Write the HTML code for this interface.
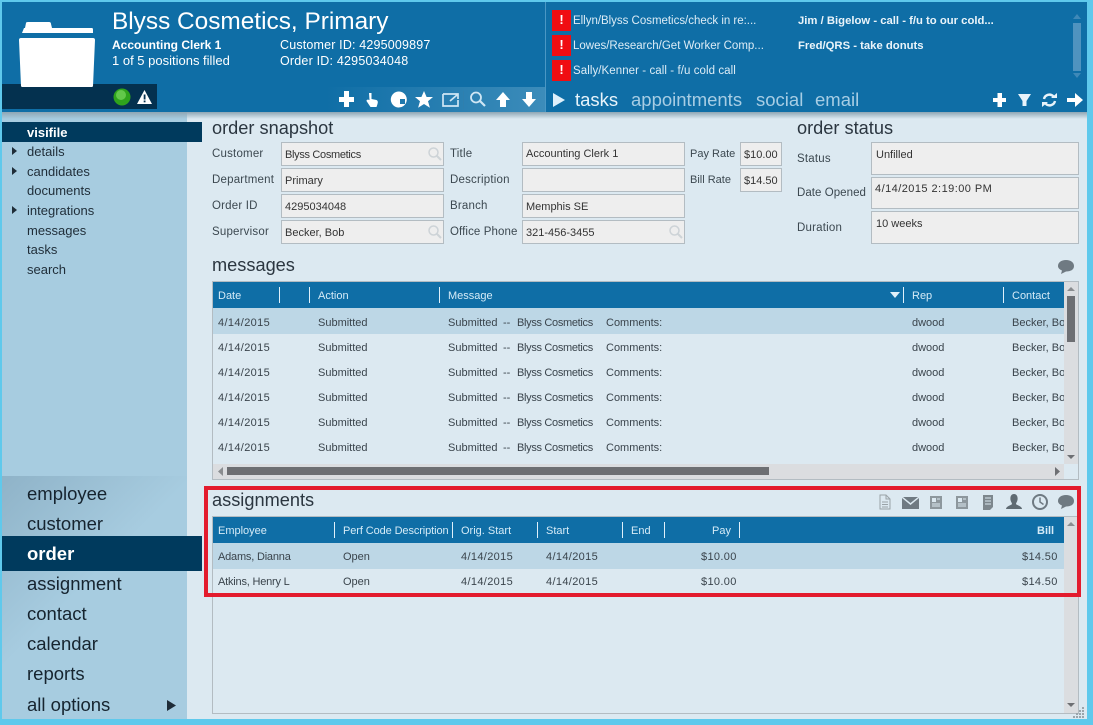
<!DOCTYPE html>
<html><head><meta charset="utf-8"><style>
*{box-sizing:border-box}
html,body{margin:0;padding:0}
body{width:1093px;height:725px;overflow:hidden;position:relative;background:#5fc9ec;font-family:"Liberation Sans",sans-serif;font-size:11px;color:#333}
div,span,svg{position:absolute}
.t{white-space:nowrap;line-height:14px}
.w{color:#fff}
.h{font-size:18.2px;line-height:22px;color:#2b3640;white-space:nowrap}
.l{white-space:nowrap;line-height:14px;color:#3c4850;letter-spacing:.2px;font-size:11.5px;margin-top:1px}
.f{background:#eeeeee;border:1px solid #b3bcc2;padding:1px 3px 0;white-space:nowrap;line-height:25px;color:#333;font-size:11px}
.n{left:27px;font-size:13px;line-height:16px;color:#1f2d38;white-space:nowrap;margin-top:1px}
.m{left:27px;font-size:18.5px;line-height:22px;color:#16242f;white-space:nowrap}
.hr{color:#d5ebf7;white-space:nowrap;line-height:14px;font-size:11px;margin-top:1px}
.s{background:#dff0fa;width:1px}
.c{white-space:nowrap;line-height:14px;color:#3a444c;font-size:11px;margin-top:1px}
.d{letter-spacing:.35px}
.b{letter-spacing:-.32px}
.ex{left:552px;width:19px;height:21px;background:#f00d12;color:#fff;font-weight:bold;font-size:13px;line-height:20px;text-align:center}
.tk{color:#dcecf6;white-space:nowrap;line-height:14px;letter-spacing:.07px;font-size:11.5px}
.ar{width:0;height:0;border-left:5px solid #1f2d38;border-top:4px solid transparent;border-bottom:4px solid transparent;left:12px}
</style></head><body>

<div style="left:2px;top:2px;width:1085px;height:717px;background:#dce9f1"></div>
<div style="left:2px;top:112px;width:185px;height:607px;background:#a7cce0"></div>
<div style="left:2px;top:476px;width:185px;height:243px;background:linear-gradient(135deg,#8fb3c8 0,#a7cce0 45%)"></div>
<div style="left:2px;top:112px;width:1085px;height:7px;background:linear-gradient(#8fa6b4,rgba(200,220,232,0))"></div>

<!-- header -->
<div style="left:2px;top:2px;width:1085px;height:110px;background:#0f6ea6"></div>
<div style="left:326px;top:87px;width:219px;height:25px;background:linear-gradient(90deg,#0f6ea6,#3c8cba)"></div>
<div style="left:545px;top:2px;width:1px;height:110px;background:#4a97c4"></div>
<div style="left:2px;top:84px;width:155px;height:25px;background:#04314f"></div>
<svg style="left:16px;top:20px" width="82" height="72" viewBox="0 0 82 72"><path d="M6 13 L8 8 H9 L10 3 Q10 2 12 2 H33 Q35 2 35 4 L36 8 H76 Q77 8 77 10 V13Z M3 20 Q3 18 5 18 H77 Q79 18 79 20 L77 66 Q77 67 75 67 H7 Q5 67 5 66Z" fill="#fff"/></svg>
<svg style="left:113px;top:88px" width="18" height="18"><circle cx="9" cy="9" r="8.500" fill="#2fa31c"/><circle cx="8" cy="7" r="5" fill="#62c84a"/></svg>
<svg style="left:137px;top:90px" width="15" height="14"><path d="M7.500 0 L15 14 H0Z" fill="#fff"/><rect x="6.700" y="4.500" width="1.800" height="5" fill="#04314f"/><rect x="6.700" y="10.500" width="1.800" height="1.800" fill="#04314f"/></svg>

<div style="left:112px;top:7px;font-size:24.4px;line-height:30px;color:#fff;white-space:nowrap">Blyss Cosmetics, Primary</div>
<div class="t w" style="left:112px;top:38px;font-size:12px;font-weight:bold">Accounting Clerk 1</div>
<div class="t w" style="left:112px;top:54px;font-size:13px">1 of 5 positions filled</div>
<div class="t w" style="left:280px;top:38px;font-size:12.500px;letter-spacing:.17px">Customer ID: 4295009897</div>
<div class="t w" style="left:280px;top:54px;font-size:12.500px;letter-spacing:.2px">Order ID: 4295034048</div>

<!-- toolbar icons -->
<svg style="left:338px;top:90px" width="200" height="20" viewBox="0 0 200 20" fill="#fff">
<path d="M1 7 H6 V1 H11 V7 H16 V12 H11 V17 H6 V12 H1Z"/>
<path d="M31 3 h2.500 v6 l5 1 q2 1 1 4 l-1 3 h-6 l-4 -6 q0 -2 3 -1z"/>
<path d="M58 2 a8 8 0 1 1 -3 13 a8 8 0 0 1 3 -13z M62 9 v5 h5 v-5z" fill-rule="evenodd"/>
<path d="M86 1 l2.600 6 h6.400 l-5 4.200 l1.900 6.500 l-5.900 -3.700 l-5.900 3.700 l1.900 -6.500 l-5 -4.200 h6.400z"/>
<path d="M105 4 H115 M105 4 V16 H120 V10 M112 11 L119 5 M115 4 H120 V9" fill="none" stroke="#cfe6f4" stroke-width="1.700"/>
<rect x="125" y="1" width="1" height="18" fill="#2f7fae"/>
<circle cx="138" cy="7.500" r="5" fill="none" stroke="#cfe6f4" stroke-width="1.800"/><path d="M142 11 L147 16" stroke="#cfe6f4" stroke-width="2.200"/>
<path d="M165 2 L172 10 H168 V17 H162 V10 H158Z"/>
<path d="M191 17 L198 9 H194 V2 H188 V9 H184Z"/>
</svg>

<!-- notifications -->
<div class="ex" style="top:10px">!</div><div class="ex" style="top:35px">!</div><div class="ex" style="top:60px">!</div>
<div class="tk" style="left:573px;top:14px;letter-spacing:-.02px">Ellyn/Blyss Cosmetics/check in re:...</div>
<div class="tk" style="left:573px;top:39px;letter-spacing:0">Lowes/Research/Get Worker Comp...</div>
<div class="tk" style="left:573px;top:64px">Sally/Kenner - call - f/u cold call</div>
<div class="t w" style="left:798px;top:14px;font-weight:bold;font-size:11.300px;color:#eaf4fa">Jim / Bigelow - call - f/u to our cold...</div>
<div class="t w" style="left:798px;top:39px;font-weight:bold;font-size:11.300px;color:#eaf4fa">Fred/QRS - take donuts</div>
<div style="left:1073px;top:23px;width:8px;height:48px;background:#4f93bf"></div>
<svg style="left:1072px;top:13px" width="10" height="66"><path d="M1 6 L5 1 L9 6Z M1 60 H9 L5 65Z" fill="#3f89b8"/></svg>

<svg style="left:553px;top:93px" width="13" height="14"><path d="M0 0 L12 7 L0 14Z" fill="#dff0fa"/></svg>
<div style="left:575px;top:89px;font-size:18.500px;line-height:22px;color:#e8f4fb;white-space:nowrap">tasks</div>
<div style="left:631px;top:89px;font-size:18.500px;line-height:22px;color:#a7cde4;white-space:nowrap">appointments</div>
<div style="left:756px;top:89px;font-size:18.500px;line-height:22px;color:#a7cde4;white-space:nowrap">social</div>
<div style="left:815px;top:89px;font-size:18.500px;line-height:22px;color:#a7cde4;white-space:nowrap">email</div>
<svg style="left:992px;top:91px" width="92" height="18" viewBox="0 0 92 18" fill="#fff">
<path d="M1 7 H5.500 V2 H10 V7 H14 V11 H10 V16 H5.500 V11 H1Z"/>
<path d="M26 3 H39 L34.500 10 V15 H30.500 V10Z" fill="#e8f3fa"/>
<path d="M52 8 a5.500 5.500 0 0 1 9.500 -2.500 M63 10 a5.500 5.500 0 0 1 -9.500 2.500" fill="none" stroke="#e8f3fa" stroke-width="2.400"/><path d="M59 7 H65 V2Z M56 11 H50 V16Z" fill="#e8f3fa"/>
<path d="M75 7 H83 V2 L91 9 L83 16 V11 H75Z"/>
</svg>

<!-- left nav -->
<div style="left:2px;top:122px;width:200px;height:20px;background:#003a5d"></div>
<div class="n" style="top:124px;color:#fff;font-weight:bold">visifile</div>
<div class="n" style="top:143px">details</div><div class="ar" style="top:147px"></div>
<div class="n" style="top:163px">candidates</div><div class="ar" style="top:167px"></div>
<div class="n" style="top:182px">documents</div>
<div class="n" style="top:202px">integrations</div><div class="ar" style="top:206px"></div>
<div class="n" style="top:222px">messages</div>
<div class="n" style="top:241px">tasks</div>
<div class="n" style="top:261px">search</div>

<div style="left:2px;top:536px;width:200px;height:35px;background:#003a5d"></div>
<div class="m" style="top:483px">employee</div>
<div class="m" style="top:513px">customer</div>
<div class="m" style="top:543px;color:#fff;font-weight:bold">order</div>
<div class="m" style="top:573px">assignment</div>
<div class="m" style="top:603px">contact</div>
<div class="m" style="top:633px">calendar</div>
<div class="m" style="top:663px">reports</div>
<div class="m" style="top:694px">all options</div>
<svg style="left:167px;top:700px" width="10" height="11"><path d="M0 0 L9 5.500 L0 11Z" fill="#1e2c38"/></svg>

<!-- order snapshot -->
<div class="h" style="left:212px;top:117px">order snapshot</div>
<div class="l" style="left:212px;top:146px">Customer</div>
<div class="l" style="left:212px;top:172px">Department</div>
<div class="l" style="left:212px;top:198px">Order ID</div>
<div class="l" style="left:212px;top:224px">Supervisor</div>
<div class="f b" style="left:281px;top:142px;width:163px;height:24px;line-height:23px">Blyss Cosmetics</div>
<div class="f" style="left:281px;top:168px;width:163px;height:24px;line-height:22px">Primary</div>
<div class="f" style="left:281px;top:194px;width:163px;height:24px;line-height:22px">4295034048</div>
<div class="f" style="left:281px;top:220px;width:163px;height:24px;line-height:23px">Becker, Bob</div>
<div class="l" style="left:450px;top:146px">Title</div>
<div class="l" style="left:450px;top:172px">Description</div>
<div class="l" style="left:450px;top:198px">Branch</div>
<div class="l" style="left:450px;top:224px;letter-spacing:.1px">Office Phone</div>
<div class="f" style="left:522px;top:142px;width:163px;height:24px;line-height:21px">Accounting Clerk 1</div>
<div class="f" style="left:522px;top:168px;width:163px;height:24px"></div>
<div class="f" style="left:522px;top:194px;width:163px;height:24px;line-height:22px">Memphis SE</div>
<div class="f" style="left:522px;top:220px;width:163px;height:24px;line-height:23px">321-456-3455</div>
<svg style="left:428px;top:147px" width="14" height="14"><circle cx="5.500" cy="5.500" r="4.500" fill="none" stroke="#cdd3d7" stroke-width="1.500"/><path d="M9 9 L13 13" stroke="#cdd3d7" stroke-width="2"/></svg>
<svg style="left:428px;top:225px" width="14" height="14"><circle cx="5.500" cy="5.500" r="4.500" fill="none" stroke="#cdd3d7" stroke-width="1.500"/><path d="M9 9 L13 13" stroke="#cdd3d7" stroke-width="2"/></svg>
<svg style="left:669px;top:225px" width="14" height="14"><circle cx="5.500" cy="5.500" r="4.500" fill="none" stroke="#cdd3d7" stroke-width="1.500"/><path d="M9 9 L13 13" stroke="#cdd3d7" stroke-width="2"/></svg>
<div class="l" style="left:690px;top:146px;font-size:11px;letter-spacing:0">Pay Rate</div>
<div class="l" style="left:690px;top:172px;font-size:11px;letter-spacing:0">Bill Rate</div>
<div class="f" style="left:740px;top:142px;width:42px;height:24px;line-height:23px">$10.00</div>
<div class="f" style="left:740px;top:168px;width:42px;height:24px;line-height:23px">$14.50</div>

<!-- order status -->
<div class="h" style="left:797px;top:117px">order status</div>
<div class="l" style="left:797px;top:151px">Status</div>
<div class="l" style="left:797px;top:185px;letter-spacing:.05px">Date Opened</div>
<div class="l" style="left:797px;top:220px">Duration</div>
<div class="f" style="left:871px;top:142px;width:208px;height:33px;padding-left:4px;line-height:22px">Unfilled</div>
<div class="f d" style="left:871px;top:177px;width:208px;height:32px;padding-left:3px;line-height:20px;letter-spacing:.45px">4/14/2015 2:19:00 PM</div>
<div class="f" style="left:871px;top:211px;width:208px;height:33px;padding-left:4px;line-height:23px">10 weeks</div>

<!-- messages -->
<div class="h" style="left:212px;top:254px">messages</div>
<svg style="left:1058px;top:260px" width="16" height="14"><path d="M8 0 C13 0 16 2.500 16 6 C16 9.500 13 11.500 8 11.500 L3 14 L4 10.500 C1.500 9.500 0 8 0 6 C0 2.500 3 0 8 0Z" fill="#6f7a82"/></svg>
<div style="left:212px;top:281px;width:867px;height:199px;border:1px solid #b3bcc2;border-right-color:#b3bcc2"></div>
<div style="left:213px;top:282px;width:851px;height:26px;background:#0f6ea6"></div>
<div class="hr" style="left:218px;top:288px">Date</div>
<div class="s" style="left:279px;top:287px;height:16px"></div>
<div class="s" style="left:309px;top:287px;height:16px"></div>
<div class="hr" style="left:318px;top:288px">Action</div>
<div class="s" style="left:439px;top:287px;height:16px"></div>
<div class="hr" style="left:448px;top:288px">Message</div>
<svg style="left:890px;top:292px" width="10" height="6"><path d="M0 0 H10 L5 6Z" fill="#dff0fa"/></svg>
<div class="s" style="left:903px;top:287px;height:16px"></div>
<div class="hr" style="left:912px;top:288px">Rep</div>
<div class="s" style="left:1003px;top:287px;height:16px"></div>
<div class="hr" style="left:1012px;top:288px">Contact</div>
<div style="left:213px;top:308px;width:851px;height:26px;background:#bdd7e6"></div>
<div style="left:1064px;top:282px;width:14px;height:182px;background:#dbdde0"></div>
<div style="left:1067px;top:296px;width:8px;height:46px;background:#6d6f73"></div>
<svg style="left:1066px;top:286px" width="10" height="6"><path d="M1 5 L5 1 L9 5Z" fill="#8a8d90"/></svg>
<svg style="left:1066px;top:454px" width="10" height="6"><path d="M1 1 H9 L5 5Z" fill="#6d6f73"/></svg>
<div style="left:213px;top:464px;width:851px;height:15px;background:#dbdde0"></div>
<div style="left:227px;top:467px;width:542px;height:8px;background:#6d6f73"></div>
<svg style="left:218px;top:467px" width="6" height="9"><path d="M5 0 V9 L0 4.500Z" fill="#8a8d90"/></svg>
<svg style="left:1055px;top:467px" width="6" height="9"><path d="M0 0 V9 L5 4.500Z" fill="#6d6f73"/></svg>

<div class="c d" style="left:218px;top:315px">4/14/2015</div><div class="c" style="left:318px;top:315px">Submitted</div><div class="c" style="left:448px;top:315px">Submitted</div><div class="c" style="left:503px;top:315px">--</div><div class="c b" style="left:517px;top:315px">Blyss Cosmetics</div><div class="c" style="left:606px;top:315px">Comments:</div><div class="c" style="left:912px;top:315px">dwood</div><div class="c" style="left:1012px;top:315px;width:52px;overflow:hidden">Becker, Bob</div>
<div class="c d" style="left:218px;top:340px">4/14/2015</div><div class="c" style="left:318px;top:340px">Submitted</div><div class="c" style="left:448px;top:340px">Submitted</div><div class="c" style="left:503px;top:340px">--</div><div class="c b" style="left:517px;top:340px">Blyss Cosmetics</div><div class="c" style="left:606px;top:340px">Comments:</div><div class="c" style="left:912px;top:340px">dwood</div><div class="c" style="left:1012px;top:340px;width:52px;overflow:hidden">Becker, Bob</div>
<div class="c d" style="left:218px;top:365px">4/14/2015</div><div class="c" style="left:318px;top:365px">Submitted</div><div class="c" style="left:448px;top:365px">Submitted</div><div class="c" style="left:503px;top:365px">--</div><div class="c b" style="left:517px;top:365px">Blyss Cosmetics</div><div class="c" style="left:606px;top:365px">Comments:</div><div class="c" style="left:912px;top:365px">dwood</div><div class="c" style="left:1012px;top:365px;width:52px;overflow:hidden">Becker, Bob</div>
<div class="c d" style="left:218px;top:390px">4/14/2015</div><div class="c" style="left:318px;top:390px">Submitted</div><div class="c" style="left:448px;top:390px">Submitted</div><div class="c" style="left:503px;top:390px">--</div><div class="c b" style="left:517px;top:390px">Blyss Cosmetics</div><div class="c" style="left:606px;top:390px">Comments:</div><div class="c" style="left:912px;top:390px">dwood</div><div class="c" style="left:1012px;top:390px;width:52px;overflow:hidden">Becker, Bob</div>
<div class="c d" style="left:218px;top:415px">4/14/2015</div><div class="c" style="left:318px;top:415px">Submitted</div><div class="c" style="left:448px;top:415px">Submitted</div><div class="c" style="left:503px;top:415px">--</div><div class="c b" style="left:517px;top:415px">Blyss Cosmetics</div><div class="c" style="left:606px;top:415px">Comments:</div><div class="c" style="left:912px;top:415px">dwood</div><div class="c" style="left:1012px;top:415px;width:52px;overflow:hidden">Becker, Bob</div>
<div class="c d" style="left:218px;top:440px">4/14/2015</div><div class="c" style="left:318px;top:440px">Submitted</div><div class="c" style="left:448px;top:440px">Submitted</div><div class="c" style="left:503px;top:440px">--</div><div class="c b" style="left:517px;top:440px">Blyss Cosmetics</div><div class="c" style="left:606px;top:440px">Comments:</div><div class="c" style="left:912px;top:440px">dwood</div><div class="c" style="left:1012px;top:440px;width:52px;overflow:hidden">Becker, Bob</div>

<!-- assignments -->
<div class="h" style="left:212px;top:489px">assignments</div>
<div style="left:212px;top:516px;width:867px;height:198px;border:1px solid #b3bcc2"></div>
<div style="left:213px;top:517px;width:851px;height:26px;background:#0f6ea6"></div>
<div style="left:213px;top:543px;width:851px;height:26px;background:#bdd7e6"></div>
<div style="left:1064px;top:517px;width:14px;height:196px;background:#dbdde0"></div>
<svg style="left:1066px;top:521px" width="10" height="6"><path d="M1 5 L5 1 L9 5Z" fill="#8a8d90"/></svg>
<svg style="left:1066px;top:702px" width="10" height="6"><path d="M1 1 H9 L5 5Z" fill="#6d6f73"/></svg>
<div class="hr" style="left:218px;top:523px">Employee</div>
<div class="s" style="left:334px;top:522px;height:16px"></div>
<div class="hr" style="left:343px;top:523px;letter-spacing:-.1px">Perf Code Description</div>
<div class="s" style="left:452px;top:522px;height:16px"></div>
<div class="hr" style="left:461px;top:523px">Orig. Start</div>
<div class="s" style="left:537px;top:522px;height:16px"></div>
<div class="hr" style="left:546px;top:523px">Start</div>
<div class="s" style="left:622px;top:522px;height:16px"></div>
<div class="hr" style="left:631px;top:523px">End</div>
<div class="s" style="left:664px;top:522px;height:16px"></div>
<div class="hr" style="left:712px;top:523px">Pay</div>
<div class="s" style="left:739px;top:522px;height:16px"></div>
<div class="hr" style="left:1037px;top:523px;font-weight:bold">Bill</div>
<div class="c" style="left:218px;top:549px;letter-spacing:-.2px">Adams, Dianna</div><div class="c" style="left:343px;top:549px">Open</div><div class="c d" style="left:461px;top:549px">4/14/2015</div><div class="c d" style="left:546px;top:549px">4/14/2015</div><div class="c d" style="left:701px;top:549px">$10.00</div><div class="c d" style="left:1022px;top:549px">$14.50</div>
<div class="c" style="left:218px;top:574px;letter-spacing:-.2px">Atkins, Henry L</div><div class="c" style="left:343px;top:574px">Open</div><div class="c d" style="left:461px;top:574px">4/14/2015</div><div class="c d" style="left:546px;top:574px">4/14/2015</div><div class="c d" style="left:701px;top:574px">$10.00</div><div class="c d" style="left:1022px;top:574px">$14.50</div>

<!-- assignment icons -->
<svg style="left:878px;top:493px" width="198" height="18" viewBox="0 0 198 18">
<path d="M2 2 H8 L12 6 V16 H2Z M8 2 V6 H12 M4 9 H10 M4 11.500 H10 M4 14 H10" fill="none" stroke="#9aa3a8"/>
<path d="M25 4 H40 L32.500 10Z M24 5 L32.500 12 L41 5 V16 H24Z" fill="#6f7a82"/>
<rect x="52" y="3" width="12" height="13" fill="#8d979d"/><rect x="54" y="5" width="4" height="4" fill="#dce9f1"/><path d="M59 6 H62 M54 11 H62 M54 13 H62" stroke="#dce9f1"/>
<rect x="78" y="3" width="12" height="13" fill="#8d979d"/><rect x="80" y="5" width="4" height="4" fill="#dce9f1"/><path d="M85 6 H88 M80 11 H88 M80 13 H88" stroke="#dce9f1"/>
<path d="M105 2 H115 V14 L112 17 H105Z" fill="#7d878d"/><path d="M107 5 H113 M107 8 H113 M107 11 H113" stroke="#dce9f1"/>
<path d="M136 1 C139 1 140 4 139.500 7 C139 9 138 10 138 11 C138 12 144 13 144 16 H128 C128 13 134 12 134 11 C134 10 133 9 132.500 7 C132 4 133 1 136 1Z" fill="#5f6b73"/>
<circle cx="162" cy="9" r="7" fill="none" stroke="#6f7a82" stroke-width="2"/><path d="M162 4.500 V9 L165.500 11.500" fill="none" stroke="#6f7a82" stroke-width="1.500"/>
<path d="M188 2 C193 2 196 4.500 196 8 C196 11.500 193 13.500 188 13.500 L183 16 L184 12.500 C181.500 11.500 180 10 180 8 C180 4.500 183 2 188 2Z" fill="#6f7a82"/>
</svg>

<!-- red box -->
<div style="left:204px;top:486px;width:877px;height:111px;border:4px solid #e31b2d"></div>

<!-- resize grip -->
<svg style="left:1073px;top:707px" width="12" height="12" fill="#9aa5ab"><rect x="9" y="0" width="2" height="2"/><rect x="6" y="3" width="2" height="2"/><rect x="9" y="3" width="2" height="2"/><rect x="3" y="6" width="2" height="2"/><rect x="6" y="6" width="2" height="2"/><rect x="9" y="6" width="2" height="2"/><rect x="0" y="9" width="2" height="2"/><rect x="3" y="9" width="2" height="2"/><rect x="6" y="9" width="2" height="2"/><rect x="9" y="9" width="2" height="2"/></svg>
</body></html>
